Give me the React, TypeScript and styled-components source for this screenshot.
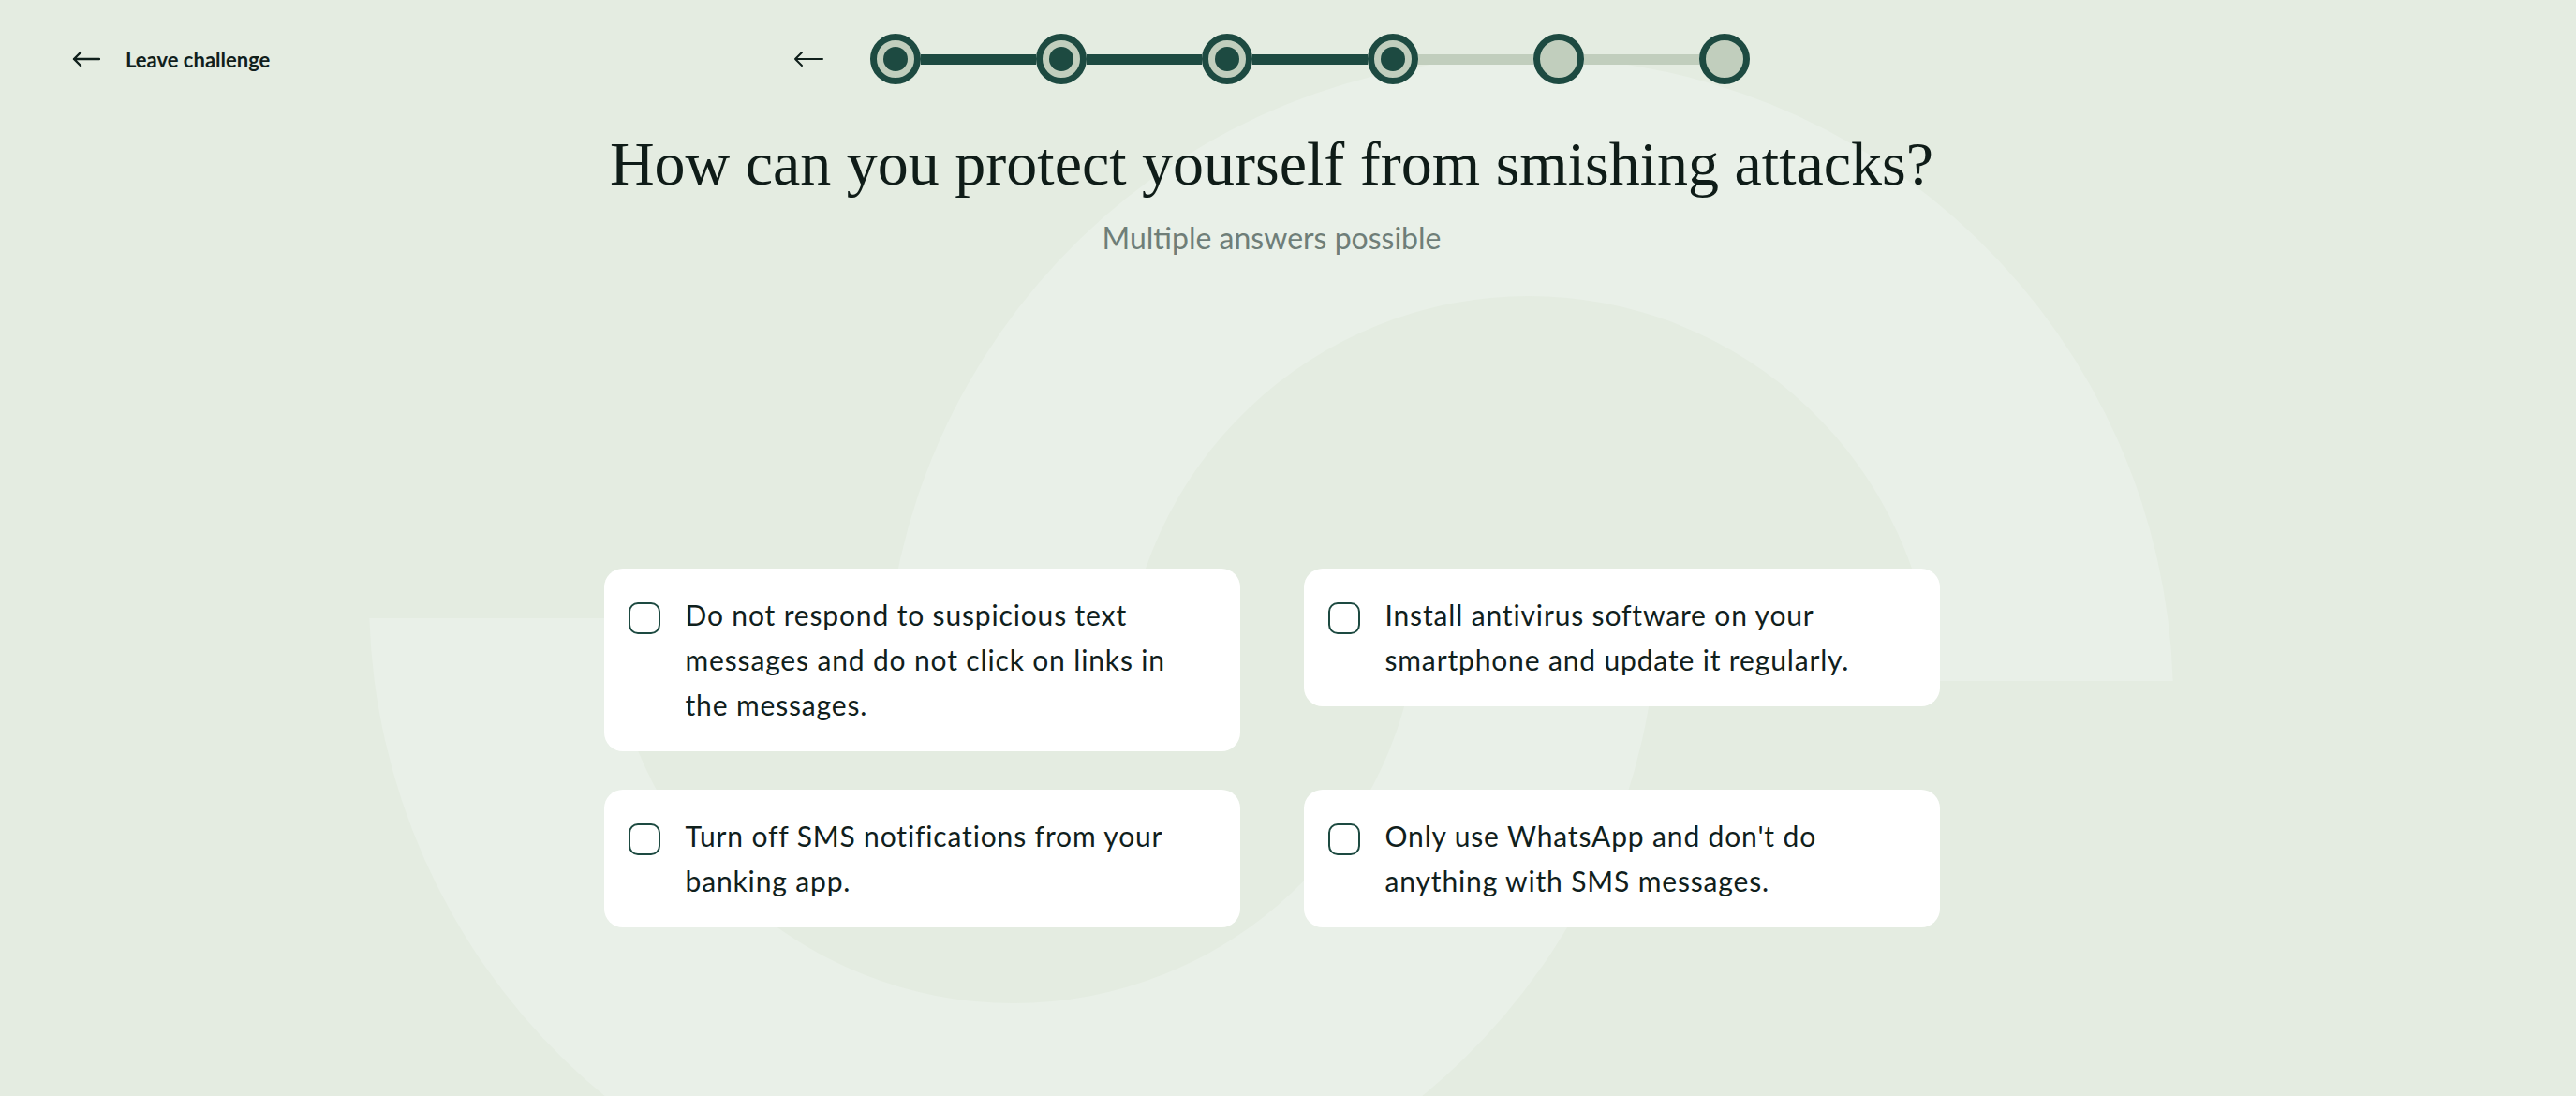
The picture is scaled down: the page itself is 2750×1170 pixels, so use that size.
import { Fragment } from 'react';
import styled, { createGlobalStyle } from 'styled-components';

const GlobalStyle = createGlobalStyle`
  html, body {
    margin: 0;
    padding: 0;
  }

  body {
    background: #e4ece1;
    font-family: Lato, 'Noto Sans', sans-serif;
    color: #10201c;
    overflow: hidden;
  }
`;

const DARK = '#1d4a41';
const LIGHT = '#c1cebd';

type StepState = 'done' | 'current' | 'todo';

const steps: StepState[] = ['done', 'done', 'done', 'current', 'todo', 'todo'];

const answers = [
  'Do not respond to suspicious text messages and do not click on links in the messages.',
  'Install antivirus software on your smartphone and update it regularly.',
  'Turn off SMS notifications from your banking app.',
  "Only use WhatsApp and don't do anything with SMS messages.",
];

const Page = styled.div`
  position: relative;
  width: 100%;
  height: 1170px;
  overflow: hidden;
`;

// decorative logo shape behind the content
const Backdrop = styled.svg`
  position: absolute;
  top: 0;
  left: 0;
  width: 2750px;
  height: 1170px;
  pointer-events: none;
`;

const Content = styled.main`
  position: relative;
  padding-right: 35px;
  display: flex;
  flex-direction: column;
  align-items: center;
`;

const Header = styled.header`
  align-self: stretch;
  display: grid;
  grid-template-columns: 1fr auto 1fr;
  align-items: center;
  padding: 36px 77px 0;
`;

const LeaveLink = styled.a`
  justify-self: start;
  display: flex;
  align-items: center;
  gap: 27px;
  font-size: 22px;
  font-weight: 700;
  color: #10201c;
  text-decoration: none;
  cursor: pointer;
`;

const Progress = styled.nav`
  display: flex;
  align-items: center;
`;

const BackButton = styled.button`
  display: flex;
  align-items: center;
  padding: 0;
  margin-right: 50px;
  border: 0;
  background: none;
  color: #10201c;
  cursor: pointer;
`;

const Dot = styled.span<{ $state: StepState }>`
  box-sizing: border-box;
  width: 54px;
  height: 54px;
  flex-shrink: 0;
  border-radius: 50%;
  border: 7px solid ${DARK};
  background: ${LIGHT};
  display: grid;
  place-items: center;

  &::after {
    content: '';
    display: ${(p) => (p.$state === 'todo' ? 'none' : 'block')};
    width: 26px;
    height: 26px;
    border-radius: 50%;
    background: ${DARK};
  }
`;

const Connector = styled.span<{ $reached: boolean }>`
  width: 123px;
  height: 11px;
  background: ${(p) => (p.$reached ? DARK : LIGHT)};
`;

const Title = styled.h1`
  margin: 45px 0 0;
  font-family: 'Liberation Serif', 'DejaVu Serif', serif;
  font-size: 66px;
  line-height: 1.2;
  font-weight: 400;
  color: #0f1c18;
  text-align: center;
`;

const Subtitle = styled.p`
  margin: 21px 0 0;
  font-size: 32px;
  line-height: 1.2;
  color: #6f7e78;
`;

const Answers = styled.div`
  margin-top: 333px;
  display: grid;
  grid-template-columns: repeat(2, 679px);
  column-gap: 68px;
  row-gap: 41px;
  align-items: start;
`;

const Card = styled.label`
  display: flex;
  align-items: flex-start;
  gap: 27px;
  padding: 25px 40px 26px 26px;
  background: #ffffff;
  border-radius: 20px;
  cursor: pointer;
`;

const Checkbox = styled.span`
  box-sizing: border-box;
  width: 34px;
  height: 34px;
  flex-shrink: 0;
  margin-top: 11px;
  border: 2px solid ${DARK};
  border-radius: 10px;
  background: #ffffff;
`;

const AnswerText = styled.span`
  font-size: 30px;
  line-height: 48px;
  letter-spacing: 0.85px;
  color: #10201c;
`;

const ArrowLeft = ({ width, stroke }: { width: number; stroke: number }) => (
  <svg width={width} height="18" viewBox={`0 0 ${width} 18`} fill="none">
    <path
      d={`M${width - 1} 9H2M9 2L2 9l7 7`}
      stroke="currentColor"
      strokeWidth={stroke}
      strokeLinecap="round"
      strokeLinejoin="round"
    />
  </svg>
);

const App = () => {
  return (
    <Page>
      <GlobalStyle />
      <Backdrop viewBox="0 0 2750 1170">
        <path
          d="M944.35 727A688 688 0 0 1 2319.65 727L2064.44 727A433 433 0 0 0 1199.56 727Z"
          fill="#e9f0e8"
        />
        <path
          d="M394.35 660A688 688 0 0 0 1769.65 660L1514.44 660A433 433 0 0 1 649.56 660Z"
          fill="#e9f0e8"
        />
      </Backdrop>
      <Content>
        <Header>
          <LeaveLink>
            <ArrowLeft width={30} stroke={2.4} />
            Leave challenge
          </LeaveLink>
          <Progress>
            <BackButton aria-label="Previous question">
              <ArrowLeft width={32} stroke={2} />
            </BackButton>
            {steps.map((state, i) => (
              <Fragment key={i}>
                {i > 0 && <Connector $reached={state !== 'todo'} />}
                <Dot $state={state} />
              </Fragment>
            ))}
          </Progress>
        </Header>

        <Title>How can you protect yourself from smishing attacks?</Title>
        <Subtitle>Multiple answers possible</Subtitle>

        <Answers>
          {answers.map((text) => (
            <Card key={text}>
              <Checkbox />
              <AnswerText>{text}</AnswerText>
            </Card>
          ))}
        </Answers>
      </Content>
    </Page>
  );
};

export default App;
